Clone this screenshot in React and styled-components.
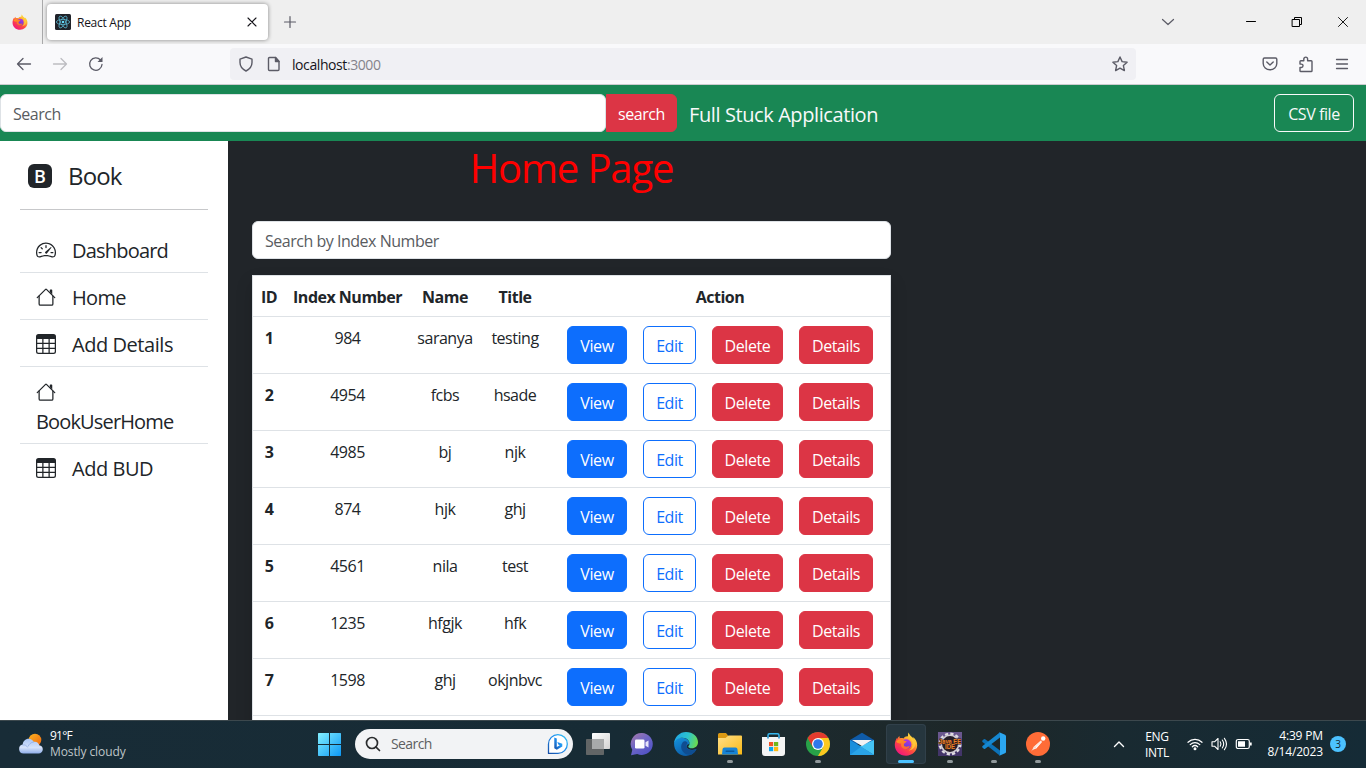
import React from "react";
import styled, { createGlobalStyle } from "styled-components";
import { BsTable, BsSpeedometer2 } from "react-icons/bs";

const Global = createGlobalStyle`
  *, *::before, *::after { box-sizing: border-box; }
  body {
    margin: 0;
    overflow: hidden;
    font-family: "Open Sans", "Noto Sans", sans-serif;
    font-size: 16px;
    line-height: 1.5;
    color: #212529;
    background: #212529;
  }
  svg { display: block; flex: none; overflow: visible; }
`;

const Screen = styled.div`
  width: 1366px;
  height: 768px;
  display: flex;
  flex-direction: column;
  overflow: hidden;
`;

/* ---------- browser window ---------- */

const TabBar = styled.div`
  height: 44px;
  flex: none;
  display: flex;
  align-items: center;
  background: #efefef;
`;
const PinnedTab = styled.div`
  width: 43px;
  height: 44px;
  border-right: 1px solid #a9a9aa;
  display: flex;
  align-items: center;
  padding-left: 12px;
`;
const Tab = styled.div`
  width: 221px;
  height: 36px;
  margin: 0 15px 0 4px;
  padding: 0 10px 0 8px;
  display: flex;
  align-items: center;
  background: #fff;
  border-radius: 4px;
  box-shadow: 0 0 4px rgba(0, 0, 0, 0.45);
`;
const TabTitle = styled.span`
  flex: 1;
  margin-left: 6px;
  padding-top: 2px;
  font-size: 12px;
  line-height: 16px;
  letter-spacing: -0.27px;
  color: #15141a;
`;
const WindowButtons = styled.div`
  margin-left: auto;
  display: flex;
  align-items: center;
`;
const WindowCell = styled.div`
  width: ${(p) => p.$w || 46}px;
  display: flex;
  justify-content: center;
`;
const ToolBar = styled.div`
  height: 41px;
  flex: none;
  display: flex;
  align-items: center;
  background: #f9f9fb;
  border-bottom: 1px solid #cccccf;
`;
const ToolCell = styled.div`
  width: 36px;
  display: flex;
  justify-content: center;
`;
const NavTools = styled.div`
  display: flex;
  width: 230px;
  padding-left: 6px;
`;
const AddressBar = styled.div`
  width: 906px;
  height: 32px;
  padding: 0 8px;
  display: flex;
  align-items: center;
  background: #f0f0f4;
  border-radius: 4px;
`;
const Address = styled.span`
  flex: 1;
  margin-left: 10px;
  padding-top: 2px;
  font-size: 14px;
  line-height: 20px;
  letter-spacing: -0.42px;
  color: #15141a;
  span { color: #84838b; }
`;
const MenuTools = styled.div`
  margin-left: auto;
  display: flex;
  padding-right: 6px;
`;

/* ---------- application ---------- */

const NavBar = styled.header`
  height: 56px;
  flex: none;
  display: flex;
  align-items: center;
  padding-right: 12px;
  background: #198754;
`;
const Input = styled.input`
  width: ${(p) => p.$w}px;
  height: 38px;
  padding: 7px 12px 5px;
  font: inherit;
  letter-spacing: -0.48px;
  border: 1px solid #dee2e6;
  border-radius: 6px;
  background: #fff;
  outline: none;
  &::placeholder { color: #595c5f; opacity: 1; }
`;
const tones = {
  primary: ["#0d6efd", "#0d6efd", "#fff"],
  outline: ["transparent", "#0d6efd", "#0d6efd"],
  danger: ["#dc3545", "#dc3545", "#fff"],
  light: ["transparent", "#f8f9fa", "#f8f9fa"],
};
const Button = styled.button`
  width: ${(p) => p.$w}px;
  height: 38px;
  flex: none;
  padding: 1px 0 0;
  font: inherit;
  line-height: 24px;
  letter-spacing: -0.42px;
  white-space: nowrap;
  border: 1px solid ${(p) => tones[p.$tone][1]};
  background: ${(p) => tones[p.$tone][0]};
  color: ${(p) => tones[p.$tone][2]};
  border-radius: ${(p) => (p.$joined ? "0 6px 6px 0" : "6px")};
`;
const Brand = styled.span`
  flex: 1;
  margin-left: 12px;
  padding-top: 3px;
  font-size: 20px;
  line-height: 30px;
  letter-spacing: -0.4px;
  color: #f8f9fa;
`;
const Body = styled.div`
  flex: 1;
  min-height: 0;
  display: flex;
  overflow: hidden;
`;
const SideBar = styled.aside`
  width: 228px;
  flex: none;
  padding: 16px 20px;
  background: #fff;
`;
const SideTitle = styled.div`
  height: 53px;
  padding: 7px 8px 0;
  display: flex;
  align-items: flex-start;
  gap: 16px;
  border-bottom: 1px solid #c7c8ca;
  margin-bottom: 16px;
  font-size: 24px;
  line-height: 24px;
  letter-spacing: -0.85px;
`;
const LogoB = styled.span`
  width: 24px;
  height: 24px;
  border-radius: 6px;
  background: #212529;
  color: #fff;
  font: 600 18px/24px "Open Sans", sans-serif;
  letter-spacing: 0;
  text-align: center;
`;
const SideItem = styled.a`
  display: flex;
  flex-direction: ${(p) => (p.$stacked ? "column" : "row")};
  align-items: ${(p) => (p.$stacked ? "flex-start" : "center")};
  gap: ${(p) => (p.$stacked ? 5 : 16)}px;
  height: ${(p) => (p.$stacked ? 77 : 47)}px;
  padding: ${(p) => (p.$stacked ? "15px 16px 6px" : "4px 16px 0")};
  border-bottom: 1px solid ${(p) => (p.$last ? "transparent" : "#dee2e6")};
  font-size: 20px;
  line-height: 30px;
  letter-spacing: ${(p) => p.$ls ?? -0.45}px;
  svg { margin-bottom: ${(p) => (p.$stacked ? 0 : 2)}px; }
`;
const Main = styled.main`
  width: 687px;
  padding: 3px 24px 0;
`;
const Heading = styled.h1`
  margin: 0 0 29px;
  font-size: 40px;
  font-weight: 400;
  line-height: 48px;
  letter-spacing: -1.15px;
  text-align: center;
  color: #f00;
`;
const Table = styled.table`
  width: 639px;
  margin-top: 16px;
  table-layout: fixed;
  border-collapse: separate;
  border-spacing: 0;
  background: #fff;
  border: 1px solid #dee2e6;
  border-bottom: 0;
  box-shadow: 0 8px 16px rgba(0, 0, 0, 0.15);
`;
const Cell = styled.td`
  height: ${(p) => (p.$head ? 41 : 57)}px;
  padding: 9px 0 0;
  vertical-align: top;
  text-align: center;
  font-weight: ${(p) => (p.$bold ? 700 : 400)};
  letter-spacing: ${(p) => (p.$bold ? -0.5 : -0.48)}px;
  border-bottom: 1px solid #dee2e6;
  white-space: nowrap;
`;
const Actions = styled.div`
  display: flex;
  gap: 16px;
  padding-left: 17px;
`;

/* ---------- taskbar ---------- */

const TaskBar = styled.footer`
  height: 48px;
  flex: none;
  display: flex;
  align-items: stretch;
  border-top: 1px solid #3c484d;
  background: linear-gradient(90deg, #182c37 0%, #172b35 45%, #1c2a2e 58%, #1e2728 72%, #192a31 82%, #152b36 100%);
  color: #fff;
  font-size: 12px;
  line-height: 16px;
`;
const Weather = styled.div`
  width: 308px;
  padding: 0 0 2px 18px;
  display: flex;
  align-items: center;
  gap: 7px;
`;
const Temp = styled.div`
  letter-spacing: -0.75px;
`;
const Sky = styled.div`
  color: #bfc5c8;
  letter-spacing: -0.1px;
`;
const AppCell = styled.div`
  position: relative;
  width: 40px;
  height: 40px;
  margin: 3px 2px 0;
  display: flex;
  align-items: center;
  justify-content: center;
  border-radius: 4px;
  background: ${(p) => (p.$active ? "#26363e" : "transparent")};
  box-shadow: ${(p) => (p.$active ? "inset 0 0 0 1px #31404a" : "none")};
`;
const Mark = styled.i`
  position: absolute;
  bottom: 1px;
  left: 50%;
  width: ${(p) => (p.$wide ? 16 : 6)}px;
  height: 3px;
  margin-left: ${(p) => (p.$wide ? -8 : -3)}px;
  border-radius: 2px;
  background: ${(p) => (p.$wide ? "#4cc2ff" : "#91999c")};
`;
const SearchPill = styled.div`
  width: 218px;
  height: 30px;
  margin: 8px 3px 0;
  padding: 0 4px 0 10px;
  display: flex;
  align-items: center;
  border-radius: 15px;
  background: #f2f3f5;
  color: #5d5f61;
  font-size: 14px;
  span { flex: 1; margin-left: 10px; letter-spacing: -0.6px; }
`;
const Tray = styled.div`
  margin-left: auto;
  display: flex;
  align-items: center;
  padding: 0 20px 1px 0;
`;
const Lang = styled.div`
  width: 32px;
  margin: 2px 14px 0 16px;
  text-align: center;
  letter-spacing: -0.3px;
`;
const Clock = styled.div`
  width: 66px;
  margin-right: 7px;
  text-align: right;
  letter-spacing: -0.15px;
  white-space: nowrap;
`;
const TrayIcons = styled.div`
  display: flex;
  align-items: center;
  gap: 8px;
  margin-right: 4px;
`;
const Count = styled.div`
  width: 16px;
  height: 16px;
  border-radius: 50%;
  background: #4cc2ff;
  color: #10242f;
  font-size: 10px;
  text-align: center;
`;

/* ---------- drawings ---------- */

const Line = ({ w = 16, h = w, sw = 1.2, c = "#5b5b66", children }) => (
  <svg width={w} height={h} viewBox={`0 0 ${w} ${h}`} fill="none" stroke={c} strokeWidth={sw} strokeLinecap="round" strokeLinejoin="round">
    {children}
  </svg>
);

const House = () => (
  <svg width="20" height="20" viewBox="0 0 16 16" fill="currentColor">
    <path d="M2 13.5V7h1v6.5a.5.5 0 0 0 .5.5h9a.5.5 0 0 0 .5-.5V7h1v6.5a1.5 1.5 0 0 1-1.5 1.5h-9A1.5 1.5 0 0 1 2 13.5zm11-11V6l-2-2V2.5a.5.5 0 0 1 .5-.5h1a.5.5 0 0 1 .5.5z" />
    <path d="M7.293 1.5a1 1 0 0 1 1.414 0l6.647 6.646a.5.5 0 0 1-.708.708L8 2.207 1.354 8.854a.5.5 0 1 1-.708-.708L7.293 1.5z" />
  </svg>
);

const Firefox = ({ size, id }) => (
  <svg width={size} height={size} viewBox="0 0 24 24">
    <defs>
      <linearGradient id={id + "a"} x1="0.85" y1="0.05" x2="0.2" y2="0.95">
        <stop offset="0" stopColor="#fff44f" />
        <stop offset="0.3" stopColor="#ffb52e" />
        <stop offset="0.6" stopColor="#ff4b3e" />
        <stop offset="1" stopColor="#f0157f" />
      </linearGradient>
      <linearGradient id={id + "b"} x1="0.8" y1="0" x2="0.4" y2="1">
        <stop offset="0" stopColor="#b833e1" />
        <stop offset="1" stopColor="#5641d5" />
      </linearGradient>
      <linearGradient id={id + "c"} x1="0" y1="0" x2="1" y2="1">
        <stop offset="0" stopColor="#ff9a1f" />
        <stop offset="1" stopColor="#ff5a36" />
      </linearGradient>
    </defs>
    <path fill={`url(#${id}a)`} d="M14.8.4c.2 1.4.8 2.500 2 3.600 1.200 1 2 1.800 2.700 2.900-.1-.8-.2-1.400-.5-2 2.800 1.900 4.300 5 4.200 8.700C23 19.400 18.200 23.700 12.100 23.700 5.600 23.700.9 19.100.8 13c0-2.900.9-5.400 2.300-7.300v1.600c.5-1.300 1.200-2.300 2.300-3.200l.3 2.200c1.300-.5 2.600-.5 3.700.1C10.600 4.600 12.900 4 14 4.400c-.1-1.600.1-2.900.8-4z" />
    <circle cx="12.300" cy="12.300" r="5" fill={`url(#${id}b)`} />
    <path fill={`url(#${id}c)`} d="M2.200 9.200c2.100-2.100 5.300-2.300 7.500-.9 1 .6 1.700.8 3 .9-.3 1.400-2.200 1.600-2.700 2.700-.4 1.200.1 2.300 1.300 2.700 1.900.6 3-.8 4.500-.1-1 2.200-3.800 3.300-6.100 2.300-2.500-1-3-3.600-2.500-5.300-2.100 0-4.500-.4-5-2.300z" />
    <path fill="#ffc93a" opacity=".85" d="M14.500 4.500c2.600 2 4.100 4.600 4 7.900-.1 2.800-1.600 5-3.800 6.200 4.200-.6 6.900-3.700 6.700-7.400-.1-2.200-1-3.900-2.300-5.200-1.900-1.200-3.400-2.400-4.100-4.300z" />
  </svg>
);

const ReactTile = () => (
  <svg width="16" height="16" viewBox="0 0 16 16">
    <rect width="16" height="16" rx="1.500" fill="#20232a" />
    <g fill="none" stroke="#5bb5cf" strokeWidth=".8">
      <ellipse cx="8" cy="8" rx="6.600" ry="2.600" />
      <ellipse cx="8" cy="8" rx="6.600" ry="2.600" transform="rotate(60 8 8)" />
      <ellipse cx="8" cy="8" rx="6.600" ry="2.600" transform="rotate(120 8 8)" />
    </g>
    <circle cx="8" cy="8" r="1.300" fill="#61dafb" />
  </svg>
);

const WeatherIcon = () => (
  <svg width="25" height="22" viewBox="0 0 25 22">
    <defs>
      <linearGradient id="sun" x1="0" y1="0" x2="1" y2="1"><stop stopColor="#fbb421" /><stop offset="1" stopColor="#f0660f" /></linearGradient>
      <linearGradient id="cloud" x1="0" y1="0" x2="0" y2="1"><stop stopColor="#a9c5f5" /><stop offset=".6" stopColor="#d5e2fa" /><stop offset="1" stopColor="#8faeea" /></linearGradient>
    </defs>
    <circle cx="17" cy="7" r="6.300" fill="url(#sun)" />
    <path fill="url(#cloud)" d="M5.500 20.500a4.500 4.500 0 0 1-.8-8.900c.2-3.400 2.800-5.900 5.900-5.900 2.300 0 4.300 1.300 5.300 3.200 2.700-.5 4.900 1.300 5.300 3.400 2.200.3 3.600 2 3.600 4 0 2.400-1.900 4.200-4.300 4.200z" />
    <path fill="none" stroke="#7f9fdd" strokeWidth=".8" opacity=".7" d="M4.700 12c2.500-.5 4 .7 5 2.500M10 13.500c1-2.500 3-4.200 6-4.600" />
  </svg>
);

const Windows = () => (
  <svg width="24" height="24" viewBox="0 0 24 24">
    <defs><linearGradient id="win" gradientUnits="userSpaceOnUse" x1="0" y1="0" x2="24" y2="24"><stop stopColor="#85f1ff" /><stop offset="1" stopColor="#0a96f5" /></linearGradient></defs>
    <path fill="url(#win)" d="M.5 1H11v11H0V1.500zM12 1h10.500l.5.500V12H12zM0 13h11v11H.5l-.5-.5zM12 13h11v10.500l-.5.500H12z" />
  </svg>
);

const Bing = () => (
  <svg width="22" height="22" viewBox="0 0 22 22">
    <defs><linearGradient id="bing" x1="0" y1="1" x2="1" y2="0"><stop stopColor="#174ea6" /><stop offset=".55" stopColor="#1f8ff0" /><stop offset="1" stopColor="#36c5f0" /></linearGradient></defs>
    <path fill="#fff" stroke="url(#bing)" strokeWidth="1.300" strokeLinejoin="round" d="M1.500 20.400V11A9.400 9.400 0 1 1 11 20.400z" />
    <path fill="url(#bing)" d="M7.300 4.500l2.500.9v8.500l3-1.700-1.500-.8-1-2.400 5 1.800v2.600l-5.500 3.300-2.500-1.400z" />
  </svg>
);

const TaskView = () => (
  <svg width="24" height="24" viewBox="0 0 24 24">
    <defs><linearGradient id="tv" x1="0" y1="0" x2="1" y2="1"><stop stopColor="#fff" /><stop offset="1" stopColor="#d2d2d2" /></linearGradient></defs>
    <rect x="6" y="1" width="18" height="16" rx=".8" fill="url(#tv)" />
    <rect x="0" y="7" width="18" height="16" rx=".8" fill="#626566" />
    <path d="M6 7h12v10H6z" fill="#a8aaab" />
  </svg>
);

const Chat = () => (
  <svg width="24" height="24" viewBox="0 0 24 24">
    <defs><linearGradient id="chat" x1="0" y1="0" x2=".7" y2="1"><stop stopColor="#a879a9" /><stop offset=".5" stopColor="#6e66c5" /><stop offset="1" stopColor="#5052c7" /></linearGradient></defs>
    <path fill="url(#chat)" d="M12 1a11 11 0 1 1-4.800 21L1 23.300l1.300-5.600A11 11 0 0 1 12 1z" />
    <rect x="5" y="7.500" width="9.500" height="9" rx="1.300" fill="#fff" />
    <path fill="#e6e4fa" d="M15.500 10.300l3-1.900v7.200l-3-1.900z" />
  </svg>
);

const Edge = () => (
  <svg width="24" height="24" viewBox="0 0 24 24">
    <defs>
      <linearGradient id="edA" x1="0" y1=".3" x2="1" y2=".5"><stop stopColor="#1fa6e6" /><stop offset=".55" stopColor="#2cc3cf" /><stop offset="1" stopColor="#6bdc4e" /></linearGradient>
      <linearGradient id="edB" x1="0" y1="0" x2=".6" y2="1"><stop stopColor="#1493df" /><stop offset="1" stopColor="#0c59a4" /></linearGradient>
    </defs>
    <path fill="url(#edB)" d="M.1 11.500C.4 7 4 5.500 8 5.700c5 .3 7.500 3 7.600 6.300-2 .2-3.200 1.200-3 2.800.4 2.600 4.600 4.100 9.800 2.300A12 12 0 0 1 12 24C5.400 24-.2 18.500.1 11.500z" />
    <path fill="#0f4d91" d="M8.500 10.500c-2 2.800-1.800 6.300.3 9.100 2 2.600 5.100 3.600 8.700 3.100A12 12 0 0 0 22.800 17c-4.300 2.300-9.200 1.200-10.200-2.200-.4-1.400.1-2.800 1-3.600-1-2.100-3.600-2.600-5.100-.7z" />
    <path fill="url(#edA)" d="M.1 11.400A12 12 0 0 1 12 0c7 0 12 4.800 12 10.300 0 3.700-2.900 6-6 6-2.300 0-3.700-.8-3.700-1.800 0-.8 1.300-1.100 1.300-3C15.600 8.600 12.900 5.700 8.500 5.700 4.200 5.700.9 8.100.1 11.400z" />
  </svg>
);

const Folder = () => (
  <svg width="24" height="24" viewBox="0 0 24 24">
    <defs><linearGradient id="fold" x1="0" y1="0" x2="1" y2="1"><stop stopColor="#ffe08a" /><stop offset="1" stopColor="#f9b916" /></linearGradient></defs>
    <path fill="#dc9a13" d="M0 2.500A1.500 1.500 0 0 1 1.500 1H8l2 2.500V8H0z" />
    <path fill="url(#fold)" d="M0 6h7.500L10.500 3.500H23a1 1 0 0 1 1 1V22.500H0z" />
    <path fill="#1683d5" d="M4.500 17.500a2 2 0 0 1 2-2h11a2 2 0 0 1 2 2l.5 5H4z" />
    <rect x="7.500" y="18.500" width="9" height="1.500" rx=".8" fill="#0c599b" />
  </svg>
);

const Store = () => (
  <svg width="24" height="24" viewBox="0 0 24 24">
    <path fill="none" stroke="#36b8f0" strokeWidth="1.500" d="M6 6V3.300q0-1.500 1.500-1.500h8q1.500 0 1.500 1.500V6" />
    <path fill="#f4f5f5" d="M0 5h23v16a3 3 0 0 1-3 3H3a3 3 0 0 1-3-3z" />
    <path stroke="#168bd0" strokeWidth="1.500" d="M6 5v1.500M17 5v1.500" />
    <path fill="#f15325" d="M7 10h4.200v4.200H7z" /><path fill="#6fb71c" d="M12 10h4.200v4.200H12z" />
    <path fill="#0aa5ef" d="M7 15h4.200v4.200H7z" /><path fill="#fdba12" d="M12 15h4.200v4.200H12z" />
  </svg>
);

const Chrome = () => (
  <svg width="24" height="24" viewBox="0 0 24 24">
    <circle cx="12" cy="12" r="12" fill="#28a148" />
    <path fill="#e33b2e" d="M1.610 6A12 12 0 0 1 22.390 6L12 6.300 6.800 15z" />
    <path fill="#fcc81f" d="M12 6h10.390A12 12 0 0 1 12 24l5.200-9z" />
    <circle cx="12" cy="12" r="6" fill="#fff" />
    <circle cx="12" cy="12" r="4.800" fill="#2f78eb" />
  </svg>
);

const Mail = () => (
  <svg width="24" height="24" viewBox="0 0 24 24">
    <path fill="#0f5ba8" d="M0 8L12 .8 24 8v4H0z" />
    <path fill="#1b8fdc" d="M0 8l12 7L24 23H0z" />
    <path fill="#45c4f5" d="M24 8v15L10 14.200z" />
    <path fill="#2aa4e8" d="M0 23l11-8.200L24 23z" />
    <path fill="#f1f2f4" d="M2 8h20l-9.500 5.800q-.5.300-1 0z" />
  </svg>
);

const Eclipse = () => (
  <svg width="24" height="24" viewBox="0 0 24 24">
    <rect width="24" height="24" fill="#6a578e" />
    <path d="M0 15h24v9H0z" fill="#433569" />
    <circle cx="12" cy="12" r="10.200" fill="none" stroke="#dedbe0" strokeWidth="2.400" strokeDasharray="3.200 2.140" />
    <circle cx="12" cy="12" r="8.700" fill="#251d28" stroke="#d1cdd5" strokeWidth="1.500" />
    <g fill="#f08228" stroke="#32201d" strokeWidth="1.200" paintOrder="stroke" fontFamily="Liberation Sans, sans-serif" fontWeight="700" textAnchor="middle">
      <text x="12" y="11.500" fontSize="6.500" textLength="22" lengthAdjust="spacingAndGlyphs">Java EE</text>
      <text x="12" y="17.200" fontSize="6.500" textLength="10" lengthAdjust="spacingAndGlyphs">IDE</text>
    </g>
  </svg>
);

const Code = () => (
  <svg width="24" height="24" viewBox="0 0 24 24">
    <path fill="#0c72b8" d="M.4 8.600l1.400-1.300q.7-.5 1.400 0L18 18.600V23.800L.5 9.900q-.6-.6-.1-1.300z" />
    <path fill="#1587d0" d="M.4 15.400l1.400 1.300q.7.500 1.400 0L18 5.400V.2L.5 14.100q-.6.600-.1 1.300z" />
    <path fill="#2ba6f0" d="M17.300 0.200L23 2.700q1 .5 1 1.600v15.400q0 1.100-1 1.600l-5.700 2.500q-.7.200-1.300-.4 1.800.8 2-1V1.600q-.2-1.800-2-1 .6-.6 1.300-.4z" />
  </svg>
);

const Postman = () => (
  <svg width="24" height="24" viewBox="0 0 24 24">
    <circle cx="12" cy="12" r="12" fill="#ff6c37" />
    <circle cx="17.200" cy="6.500" r="2.200" fill="#fff" />
    <path d="M14.800 8.500l-7 6.300-1.700 3.300 4.200-1.600 5.700-6.500z" fill="#fff" />
    <path d="M5.500 18.800L15.500 9M8 14.500l2.200 2" stroke="#f7c3ae" strokeWidth=".7" />
  </svg>
);

const ROWS = [
  [1, "984", "saranya", "testing"],
  [2, "4954", "fcbs", "hsade"],
  [3, "4985", "bj", "njk"],
  [4, "874", "hjk", "ghj"],
  [5, "4561", "nila", "test"],
  [6, "1235", "hfgjk", "hfk"],
  [7, "1598", "ghj", "okjnbvc"],
  [8, "", "", ""],
];

const APPS = [
  { key: "view", icon: <TaskView /> },
  { key: "chat", icon: <Chat /> },
  { key: "edge", icon: <Edge /> },
  { key: "files", icon: <Folder />, open: true },
  { key: "store", icon: <Store /> },
  { key: "chrome", icon: <Chrome />, open: true },
  { key: "mail", icon: <Mail /> },
  { key: "firefox", icon: <Firefox size={24} id="ft" />, open: true, active: true },
  { key: "eclipse", icon: <Eclipse />, open: true },
  { key: "code", icon: <Code />, open: true },
  { key: "postman", icon: <Postman />, open: true },
];

function BrowserChrome() {
  return (
    <>
      <TabBar>
        <PinnedTab><Firefox size={16} id="fp" /></PinnedTab>
        <Tab>
          <ReactTile />
          <TabTitle>React App</TabTitle>
          <Line w={12} c="#15141a" sw={1.1}><path d="M2 2l8 8M10 2l-8 8" /></Line>
        </Tab>
        <Line w={14} c="#5b5b66"><path d="M7 1.500v11M1.500 7h11" /></Line>
        <WindowButtons>
          <WindowCell $w={37}><Line w={14}><path d="M1.500 4.500L7 9.500l5.500-5" /></Line></WindowCell>
          <WindowCell $w={42} />
          <WindowCell><Line w={10} c="#000" sw={1}><path d="M.5 4.500h9" /></Line></WindowCell>
          <WindowCell>
            <Line w={10} c="#000" sw={1}><path d="M.5 2.500h7v7h-7zM2.500 2.500v-2h7v7h-2" /></Line>
          </WindowCell>
          <WindowCell><Line w={10} c="#000" sw={0.9}><path d="M.5.5l9 9M9.500.5l-9 9" /></Line></WindowCell>
        </WindowButtons>
      </TabBar>
      <ToolBar>
        <NavTools>
          <ToolCell><Line sw={1.3}><path d="M1.500 8h13M7 2.500L1.500 8 7 13.500" /></Line></ToolCell>
          <ToolCell><Line c="#bdbdc1" sw={1.3}><path d="M1.500 8h13M9 2.500L14.500 8 9 13.500" /></Line></ToolCell>
          <ToolCell>
            <Line sw={1.3}><path d="M14 8.500A6.200 6.200 0 1 1 12.500 4" /><path fill="#5b5b66" stroke="none" d="M14.500 1v5h-5z" /></Line>
          </ToolCell>
        </NavTools>
        <AddressBar>
          <Line sw={1.4}><path d="M8 1l6 2.200v3.300c0 3.500-2 6.500-6 8.500-4-2-6-5-6-8.500V3.200z" /></Line>
          <Line w={28} h={16} sw={1.4}>
            <path d="M15.500 1.500H9.500a1 1 0 0 0-1 1v11a1 1 0 0 0 1 1h8.500a1 1 0 0 0 1-1V5.500z" transform="translate(6 0)" />
            <path fill="#5b5b66" d="M21.500 1.500v4H25z" />
          </Line>
          <Address>localhost<span>:3000</span></Address>
          <Line sw={1.4}><path d="M8 1l2.100 4.600 5 .6-3.700 3.400 1 5L8 12.100l-4.400 2.500 1-5L.9 6.200l5-.6z" /></Line>
        </AddressBar>
        <MenuTools>
          <ToolCell><Line sw={1.4}><path d="M2.500 2h11q1.300 0 1.300 1.300V7.500a6.800 6.300 0 0 1-13.600 0V3.300Q1.200 2 2.500 2zM4.800 6L8 9l3.200-3" /></Line></ToolCell>
          <ToolCell>
            <Line sw={1.4}><path d="M2 13.500V11.500h1.300a1.700 1.700 0 0 0 0-3.400H2V5.500q0-.8.800-.8h3V3a1.900 1.900 0 0 1 3.800 0v1.700h3.600q.8 0 .8.800v9.200q0 .8-.8.800H2.800q-.8 0-.8-.8z" /></Line>
          </ToolCell>
          <ToolCell><Line sw={1.3}><path d="M2.500 3.500h11M2.500 8h11M2.500 12.500h11" /></Line></ToolCell>
        </MenuTools>
      </ToolBar>
    </>
  );
}

function Side() {
  return (
    <SideBar>
      <SideTitle><LogoB>B</LogoB>Book</SideTitle>
      <SideItem $ls={-0.8}><BsSpeedometer2 size={20} />Dashboard</SideItem>
      <SideItem $ls={-0.7}><House />Home</SideItem>
      <SideItem><BsTable size={20} />Add Details</SideItem>
      <SideItem $stacked $ls={-0.85}><House />BookUserHome</SideItem>
      <SideItem $last><BsTable size={20} />Add BUD</SideItem>
    </SideBar>
  );
}

function Books() {
  return (
    <Main>
      <Heading>Home Page</Heading>
      <Input $w={639} placeholder="Search by Index Number" />
      <Table>
        <colgroup>
          <col width="32" /><col width="125" /><col width="70" /><col width="70" /><col />
        </colgroup>
        <thead>
          <tr>
            {["ID", "Index Number", "Name", "Title", "Action"].map((t) => (
              <Cell as="th" key={t} $head $bold>{t}</Cell>
            ))}
          </tr>
        </thead>
        <tbody>
          {ROWS.map(([id, index, name, title]) => (
            <tr key={id}>
              <Cell as="th" $bold>{index && id}</Cell>
              <Cell>{index}</Cell>
              <Cell>{name}</Cell>
              <Cell>{title}</Cell>
              <Cell>
                {index && (
                  <Actions>
                    <Button $tone="primary" $w={60}>View</Button>
                    <Button $tone="outline" $w={53}>Edit</Button>
                    <Button $tone="danger" $w={71}>Delete</Button>
                    <Button $tone="danger" $w={74}>Details</Button>
                  </Actions>
                )}
              </Cell>
            </tr>
          ))}
        </tbody>
      </Table>
    </Main>
  );
}

function Taskbar() {
  return (
    <TaskBar>
      <Weather>
        <WeatherIcon />
        <div>
          <Temp>91°F</Temp>
          <Sky>Mostly cloudy</Sky>
        </div>
      </Weather>
      <AppCell><Windows /></AppCell>
      <SearchPill>
        <Line w={16} c="#2a2c2e" sw={1.7}><path d="M10.800 10.800L14.500 14.500" /><circle cx="7" cy="7" r="5.500" /></Line>
        <span>Search</span>
        <Bing />
      </SearchPill>
      {APPS.map((a) => (
        <AppCell key={a.key} $active={a.active}>
          {a.icon}
          {a.open && <Mark $wide={a.active} />}
        </AppCell>
      ))}
      <Tray>
        <Line w={12} c="#fff" sw={1.4}><path d="M1.500 8.500L6 4l4.500 4.500" /></Line>
        <Lang>ENG<br />INTL</Lang>
        <TrayIcons>
          <Line w={16} c="#fff" sw={1.2}>
            <path d="M1 6.300a10 10 0 0 1 14 0M3.200 8.600a6.900 6.900 0 0 1 9.600 0M5.300 10.800a3.900 3.900 0 0 1 5.400 0" />
            <circle cx="8" cy="12.700" r=".9" fill="#fff" />
          </Line>
          <Line w={17} h={16} c="#fff" sw={1.1}>
            <path d="M1 5.800h2.500L7 2.500v11l-3.500-3.300H1zM9.200 5.800q1.500 2.200 0 4.400M11.300 4q2.800 4 0 8M13.400 2.300q4.200 5.700 0 11.400" />
          </Line>
          <Line w={17} h={12} c="#fff" sw={1.2}>
            <rect x=".3" y="1.500" width="13" height="9" rx="1.800" />
            <path fill="#fff" stroke="none" d="M2 3.200h7v5.600H2zM14 4.500h1.700v3H14z" />
          </Line>
        </TrayIcons>
        <Clock>4:39 PM<br />8/14/2023</Clock>
        <Count>3</Count>
      </Tray>
    </TaskBar>
  );
}

export default function App() {
  return (
    <Screen>
      <Global />
      <BrowserChrome />
      <NavBar>
        <Input $w={606} placeholder="Search" />
        <Button $tone="danger" $w={71} $joined>search</Button>
        <Brand>Full Stuck Application</Brand>
        <Button $tone="light" $w={80}>CSV file</Button>
      </NavBar>
      <Body>
        <Side />
        <Books />
      </Body>
      <Taskbar />
    </Screen>
  );
}
